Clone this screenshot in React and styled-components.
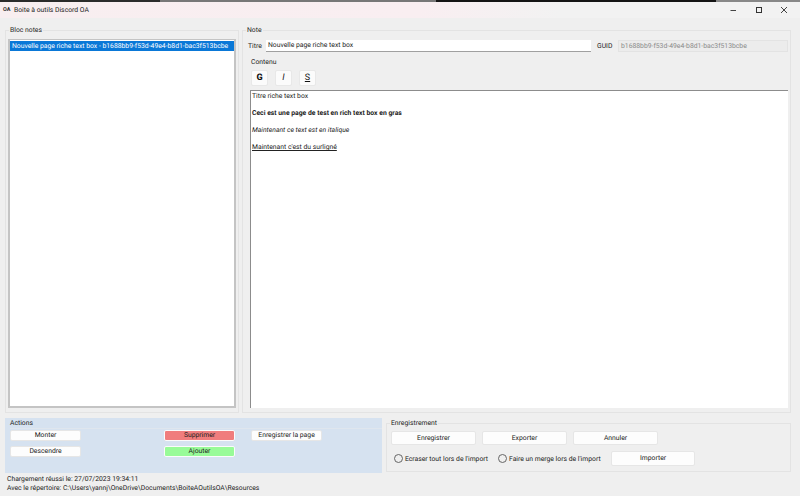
import React from 'react';
import styled, { createGlobalStyle } from 'styled-components';

const GlobalStyle = createGlobalStyle`
  html, body {
    margin: 0;
    padding: 0;
    background: #efefef;
  }
  body {
    font-family: Roboto, "Open Sans", sans-serif;
    font-size: 6.8px;
    color: #222;
    text-rendering: geometricPrecision;
  }
  button {
    font-family: Roboto, "Open Sans", sans-serif;
    text-rendering: geometricPrecision;
  }
`;

const Window = styled.div`
  width: 800px;
  height: 496px;
  display: flex;
  flex-direction: column;
  overflow: hidden;
  background: #efefef;
`;

const TopStrip = styled.div`
  height: 2px;
  background: linear-gradient(90deg, #2b2b2b 0, #2b2b2b 160px, #777 160px, #777 436px, #141414 436px, #141414 716px, #888 716px);
`;

const TitleBar = styled.div`
  height: 16px;
  display: flex;
  align-items: center;
  padding: 0 3px;
  background: linear-gradient(90deg, #f8eef0 0, #f9eef1 420px, #f2f2f2 560px);
`;

const AppIcon = styled.span`
  width: 8px;
  font-size: 5.5px;
  font-weight: 700;
  color: #333;
  margin-right: 3px;
`;

const AppTitle = styled.span`
  flex: 1;
`;

const WinButton = styled.button`
  width: 25.5px;
  height: 16px;
  padding: 0;
  border: 0;
  background: transparent;
  display: flex;
  align-items: center;
  justify-content: center;
`;

const Content = styled.div`
  flex: 1;
  display: flex;
  flex-direction: column;
  padding: 7px 9px 2px 5px;
`;

const TopRow = styled.div`
  display: flex;
  gap: 3px;
  height: 388px;
`;

const Group = styled.fieldset`
  margin: 0;
  min-width: 0;
  border: 1px solid #e3e3e3;
  padding: ${(p) => p.$pad || '0'};
  width: ${(p) => p.$width};
  height: ${(p) => p.$height || 'auto'};
  box-sizing: border-box;
  display: flex;
  flex-direction: column;
`;

const Legend = styled.legend`
  padding: 0 1px;
  margin-left: 3px;
  line-height: 10px;
`;

const NoteList = styled.div`
  flex: 1;
  margin: 4px 2px 0;
  background: #fff;
  border-style: solid;
  border-width: 1px 2px 2px 2px;
  border-color: #c4c4c4;
  padding: 1px 0 0;
`;

const NoteItem = styled.div`
  background: #0a78d7;
  color: #fff;
  height: 10px;
  line-height: 10px;
  padding-left: 2px;
  white-space: nowrap;
`;

const TitleRow = styled.div`
  display: flex;
  align-items: center;
  height: 13px;
  margin: 4px 0 0 5px;
`;

const FieldLabel = styled.label`
  width: ${(p) => p.$width}px;
  flex: none;
`;

const TextField = styled.div`
  box-sizing: border-box;
  flex: none;
  height: 12px;
  width: ${(p) => p.$width}px;
  margin-right: ${(p) => p.$after || 0}px;
  padding-left: 2px;
  white-space: nowrap;
  background: ${(p) => (p.$disabled ? '#ececec' : '#fff')};
  color: ${(p) => (p.$disabled ? '#8a8a8a' : '#222')};
  border: ${(p) => (p.$disabled ? '1px solid #e3e3e3' : '0')};
  border-bottom: 1px solid ${(p) => (p.$disabled ? '#e3e3e3' : '#a0a0a0')};
  line-height: ${(p) => (p.$disabled ? '10px' : '11px')};
`;

const ContentLabel = styled.div`
  line-height: 10px;
  margin: 5px 0 3px 8px;
`;

const FormatBar = styled.div`
  display: flex;
  gap: 7px;
  margin-left: 8px;
  margin-bottom: 4px;
`;

const FormatButton = styled.button`
  width: 17px;
  height: 16px;
  padding: 0;
  background: #fbfbfb;
  border: 1px solid #e8e8e8;
  border-radius: 2px;
  font-size: 9px;
  color: #111;
  font-weight: ${(p) => (p.$bold ? 800 : 400)};
  font-style: ${(p) => (p.$italic ? 'italic' : 'normal')};
  text-decoration: ${(p) => (p.$underline ? 'underline' : 'none')};
`;

const RichText = styled.div`
  flex: 1;
  margin-left: 7px;
  width: 538px;
  background: #fff;
  border-top: 1px solid #8c8c8c;
  border-left: 1px solid #8c8c8c;
  padding: 0 1px;
  box-sizing: border-box;
`;

const Para = styled.p`
  margin: 0;
  height: 17px;
  line-height: 11px;
  color: #222;
  font-weight: ${(p) => (p.$bold ? 700 : 400)};
  font-style: ${(p) => (p.$italic ? 'italic' : 'normal')};
  text-decoration: ${(p) => (p.$underline ? 'underline' : 'none')};
`;

const BottomRow = styled.div`
  display: flex;
  margin-top: 5px;
  height: 55px;
  gap: 4px;
`;

const ActionsPanel = styled.div`
  width: 377px;
  box-sizing: border-box;
  background: #d6e2f0;
  padding: 1px 0 0 5px;
`;

const ActionsTitle = styled.div`
  line-height: 9px;
  margin-bottom: 1px;
  border-bottom: 1px solid #dfe6ee;
`;

const ActionsGrid = styled.div`
  display: grid;
  grid-template-columns: 154px 87px 71px;
  grid-auto-rows: 11px;
  row-gap: 5px;
  margin-top: 1px;
`;

const Btn = styled.button`
  box-sizing: border-box;
  width: ${(p) => p.$width || 71}px;
  height: ${(p) => p.$height || 11}px;
  padding: 0;
  font-size: 6.8px;
  line-height: 1;
  color: #222;
  background: ${(p) => p.$bg || '#fdfdfd'};
  border: 1px solid ${(p) => (p.$bg ? '#fbfbfb' : '#e6e6e6')};
  border-radius: 2px;
  white-space: nowrap;
`;

const SaveButtons = styled.div`
  display: flex;
  gap: 6px;
  margin: 3px 0 6px 4px;
`;

const ImportRow = styled.div`
  display: flex;
  align-items: center;
  margin-left: 7px;
`;

const Radio = styled.span`
  flex: none;
  width: 7px;
  height: 7px;
  border: 1px solid #666;
  border-radius: 50%;
  margin-right: 2px;
`;

const RadioText = styled.span`
  width: ${(p) => p.$width}px;
  flex: none;
  white-space: nowrap;
`;

const Status = styled.div`
  margin-top: 2px;
  margin-left: 2px;
  line-height: 9px;
  white-space: nowrap;
`;

export default function App() {
  return (
    <Window>
      <GlobalStyle />
      <TopStrip />
      <TitleBar>
        <AppIcon>OA</AppIcon>
        <AppTitle>Boite à outils Discord OA</AppTitle>
        <WinButton aria-label="Réduire">
          <svg width="8" height="8" viewBox="0 0 8 8"><path d="M1.5 4.5h5.5" stroke="#444" fill="none" /></svg>
        </WinButton>
        <WinButton aria-label="Agrandir">
          <svg width="8" height="8" viewBox="0 0 8 8"><rect x="1.5" y="1.5" width="5" height="5" stroke="#333" fill="none" /></svg>
        </WinButton>
        <WinButton aria-label="Fermer">
          <svg width="8" height="8" viewBox="0 0 8 8"><path d="M1 1l6 6M7 1l-6 6" stroke="#444" fill="none" /></svg>
        </WinButton>
      </TitleBar>
      <Content>
        <TopRow>
          <Group $width="234px" $pad="0 0 4px 0">
            <Legend>Bloc notes</Legend>
            <NoteList>
              <NoteItem>Nouvelle page riche text box - b1688bb9-f53d-49e4-b8d1-bac3f513bcbe</NoteItem>
            </NoteList>
          </Group>
          <Group $width="549px" $pad="0 0 4px 0">
            <Legend>Note</Legend>
            <TitleRow>
              <FieldLabel $width={18}>Titre</FieldLabel>
              <TextField $width={325} $after={6}>Nouvelle page riche text box</TextField>
              <FieldLabel $width={21}>GUID</FieldLabel>
              <TextField $width={170} $disabled>b1688bb9-f53d-49e4-b8d1-bac3f513bcbe</TextField>
            </TitleRow>
            <ContentLabel>Contenu</ContentLabel>
            <FormatBar>
              <FormatButton $bold>G</FormatButton>
              <FormatButton $italic>I</FormatButton>
              <FormatButton $underline>S</FormatButton>
            </FormatBar>
            <RichText>
              <Para>Titre riche text box</Para>
              <Para $bold>Ceci est une page de test en rich text box en gras</Para>
              <Para $italic>Maintenant ce text est en italique</Para>
              <Para $underline>Maintenant c'est du surligné</Para>
            </RichText>
          </Group>
        </TopRow>
        <BottomRow>
          <ActionsPanel>
            <ActionsTitle>Actions</ActionsTitle>
            <ActionsGrid>
              <Btn>Monter</Btn>
              <Btn $bg="#f07d7d">Supprimer</Btn>
              <Btn>Enregistrer la page</Btn>
              <Btn>Descendre</Btn>
              <Btn $bg="#98fb98">Ajouter</Btn>
            </ActionsGrid>
          </ActionsPanel>
          <Group $width="405px" $height="54px">
            <Legend>Enregistrement</Legend>
            <SaveButtons>
              <Btn $width={85} $height={14}>Enregistrer</Btn>
              <Btn $width={85} $height={14}>Exporter</Btn>
              <Btn $width={85} $height={14}>Annuler</Btn>
            </SaveButtons>
            <ImportRow>
              <Radio />
              <RadioText $width={93}>Ecraser tout lors de l'import</RadioText>
              <Radio />
              <RadioText $width={102}>Faire un merge lors de l'import</RadioText>
              <Btn $width={84} $height={15}>Importer</Btn>
            </ImportRow>
          </Group>
        </BottomRow>
        <Status>
          Chargement réussi le: 27/07/2023 19:34:11
          <br />
          Avec le répertoire: C:\Users\yannj\OneDrive\Documents\BoiteAOutilsOA\Resources
        </Status>
      </Content>
    </Window>
  );
}
